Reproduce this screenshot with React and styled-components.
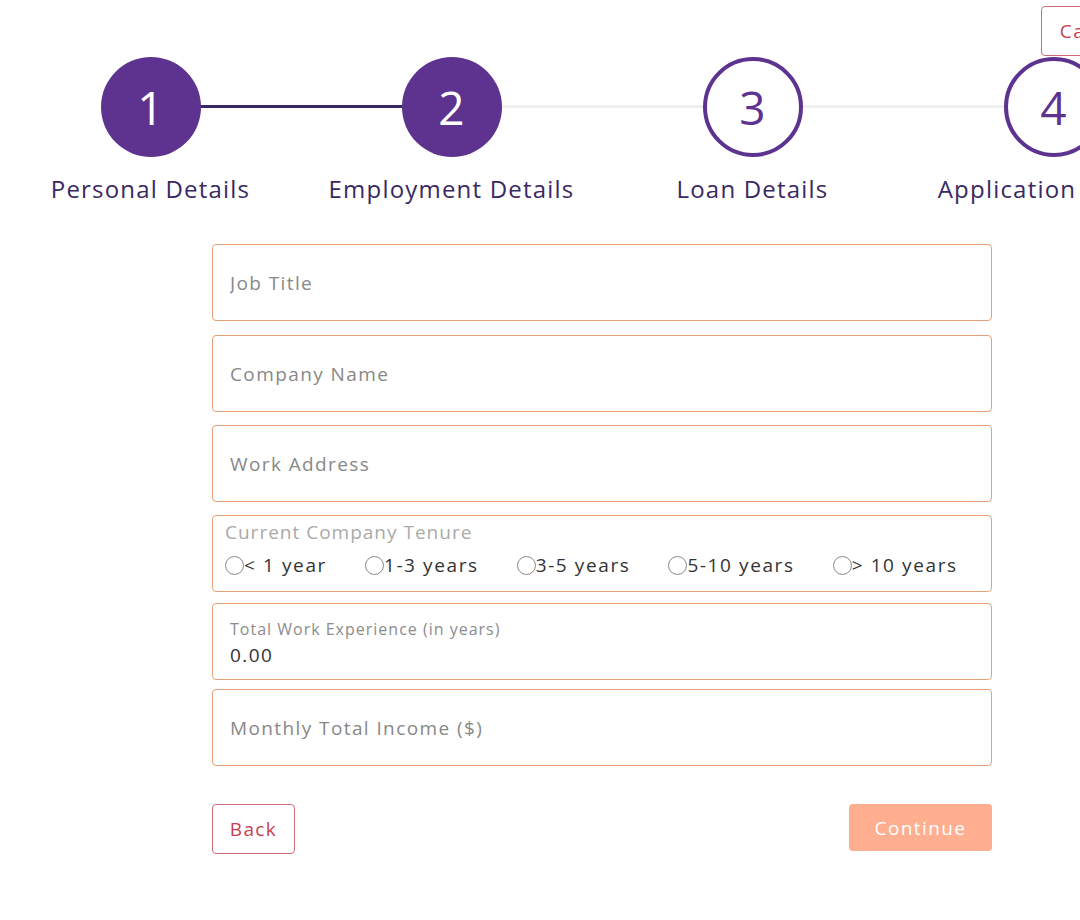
import React, { useState } from "react";
import styled, { createGlobalStyle } from "styled-components";

const GlobalStyle = createGlobalStyle`
  html, body {
    margin: 0;
    padding: 0;
    overflow: hidden;
    background: #ffffff;
    font-family: "Open Sans", "Noto Sans", sans-serif;
    letter-spacing: 1.4px;
  }
`;

const Page = styled.div`
  width: 1204px;
  display: flex;
  flex-direction: column;
`;

const TopBar = styled.div`
  display: flex;
  justify-content: flex-end;
  padding: 6px 58px 0 0;
  height: 50px;
  position: relative;
  z-index: 2;
`;

const CancelButton = styled.button`
  height: 50px;
  padding: 0 18px;
  background: #fff;
  border: 1px solid #d46a76;
  border-radius: 4px;
  color: #c9404f;
  font-family: inherit;
  font-size: 19px;
  letter-spacing: 1.4px;
`;

const Stepper = styled.div`
  display: grid;
  grid-template-columns: repeat(4, 301px);
  margin-top: 1px;
`;

const Step = styled.div`
  position: relative;
  display: flex;
  flex-direction: column;
  align-items: center;

  &::after {
    content: "";
    display: ${(p) => (p.$last ? "none" : "block")};
    position: absolute;
    top: 48px;
    left: 50%;
    width: 301px;
    height: 3px;
    background: ${(p) => (p.$done ? "#3b2766" : "#efefef")};
    z-index: 0;
  }
`;

const Circle = styled.div`
  position: relative;
  z-index: 1;
  width: 100px;
  height: 100px;
  box-sizing: border-box;
  border-radius: 50%;
  display: flex;
  align-items: center;
  justify-content: center;
  font-size: 46px;
  font-weight: 400;
  letter-spacing: 0;
  background: ${(p) => (p.$filled ? "#5e338f" : "#ffffff")};
  color: ${(p) => (p.$filled ? "#ffffff" : "#5e338f")};
  border: ${(p) => (p.$filled ? "none" : "4px solid #5e338f")};
`;

const StepLabel = styled.div`
  margin-top: 17px;
  font-size: 24px;
  line-height: 30px;
  letter-spacing: 1.2px;
  color: #3a2862;
  white-space: nowrap;
`;

const Form = styled.form`
  width: 780px;
  margin: 40px auto 0;
  display: flex;
  flex-direction: column;
`;

const Field = styled.div`
  height: 77px;
  box-sizing: border-box;
  border: 1px solid #e6a176;
  border-radius: 4px;
  margin-bottom: ${(p) => p.$mb}px;
  display: flex;
  flex-direction: column;
  justify-content: center;
  padding: 0 17px;
`;

const TextInput = styled.input`
  border: none;
  outline: none;
  padding: 0;
  font-family: inherit;
  font-size: 19px;
  letter-spacing: 1.4px;
  color: #333;
  background: transparent;

  &::placeholder {
    color: #888888;
  }
`;

const Fieldset = styled.fieldset`
  height: 77px;
  box-sizing: border-box;
  margin: 0 0 ${(p) => p.$mb}px;
  border: 1px solid #e6a176;
  border-radius: 4px;
  padding: 4px 12px 0;
  display: flex;
  flex-direction: column;
`;

const Legend = styled.div`
  font-size: 19px;
  line-height: 24px;
  letter-spacing: 1px;
  color: #aaaaaa;
`;

const RadioRow = styled.div`
  display: flex;
  gap: 38px;
  margin-top: 8px;
`;

const RadioLabel = styled.label`
  display: flex;
  align-items: center;
  font-size: 19px;
  letter-spacing: 1.6px;
  color: #333;
  white-space: nowrap;
`;

const Radio = styled.input`
  appearance: none;
  width: 19px;
  height: 19px;
  margin: 0;
  border: 1px solid #8a8a8a;
  border-radius: 50%;
  background: #fff;

  &:checked {
    background: radial-gradient(circle, #5e338f 45%, #fff 50%);
  }
`;

const SmallLabel = styled.div`
  font-size: 16px;
  line-height: 20px;
  letter-spacing: 1px;
  color: #8c8c8c;
  margin-top: 2px;
`;

const Value = styled.div`
  font-size: 19px;
  line-height: 24px;
  color: #333;
  margin-top: 4px;
`;

const Actions = styled.div`
  display: flex;
  justify-content: space-between;
  align-items: flex-start;
  margin-top: 38px;
`;

const BackButton = styled.button`
  height: 50px;
  width: 83px;
  padding: 0;
  background: #fff;
  border: 1px solid #d36b77;
  border-radius: 4px;
  color: #c9404f;
  font-family: inherit;
  font-size: 19px;
  letter-spacing: 1.4px;
`;

const ContinueButton = styled.button`
  height: 47px;
  width: 143px;
  background: #ffae8f;
  border: none;
  border-radius: 4px;
  color: #ffffff;
  font-family: inherit;
  font-size: 19px;
  letter-spacing: 1.4px;
`;

const steps = [
  { n: 1, label: "Personal Details", filled: true, done: true },
  { n: 2, label: "Employment Details", filled: true, done: false },
  { n: 3, label: "Loan Details", filled: false, done: false },
  { n: 4, label: "Application Review", filled: false, done: false },
];

const tenures = ["< 1 year", "1-3 years", "3-5 years", "5-10 years", "> 10 years"];

const App = () => {
  const [tenure, setTenure] = useState("");

  return (
    <Page>
      <GlobalStyle />
      <TopBar>
        <CancelButton>Cancel</CancelButton>
      </TopBar>
      <Stepper>
        {steps.map((s, i) => (
          <Step key={s.n} $done={s.done} $last={i === steps.length - 1}>
            <Circle $filled={s.filled}>{s.n}</Circle>
            <StepLabel>{s.label}</StepLabel>
          </Step>
        ))}
      </Stepper>
      <Form onSubmit={(e) => e.preventDefault()}>
        <Field $mb={14}>
          <TextInput placeholder="Job Title" />
        </Field>
        <Field $mb={13}>
          <TextInput placeholder="Company Name" />
        </Field>
        <Field $mb={13}>
          <TextInput placeholder="Work Address" />
        </Field>
        <Fieldset $mb={11}>
          <Legend>Current Company Tenure</Legend>
          <RadioRow>
            {tenures.map((t) => (
              <RadioLabel key={t}>
                <Radio
                  type="radio"
                  name="tenure"
                  checked={tenure === t}
                  onChange={() => setTenure(t)}
                />
                {t}
              </RadioLabel>
            ))}
          </RadioRow>
        </Fieldset>
        <Field $mb={9}>
          <SmallLabel>Total Work Experience (in years)</SmallLabel>
          <Value>0.00</Value>
        </Field>
        <Field $mb={0}>
          <TextInput placeholder="Monthly Total Income ($)" />
        </Field>
        <Actions>
          <BackButton type="button">Back</BackButton>
          <ContinueButton type="submit">Continue</ContinueButton>
        </Actions>
      </Form>
    </Page>
  );
};

export default App;
